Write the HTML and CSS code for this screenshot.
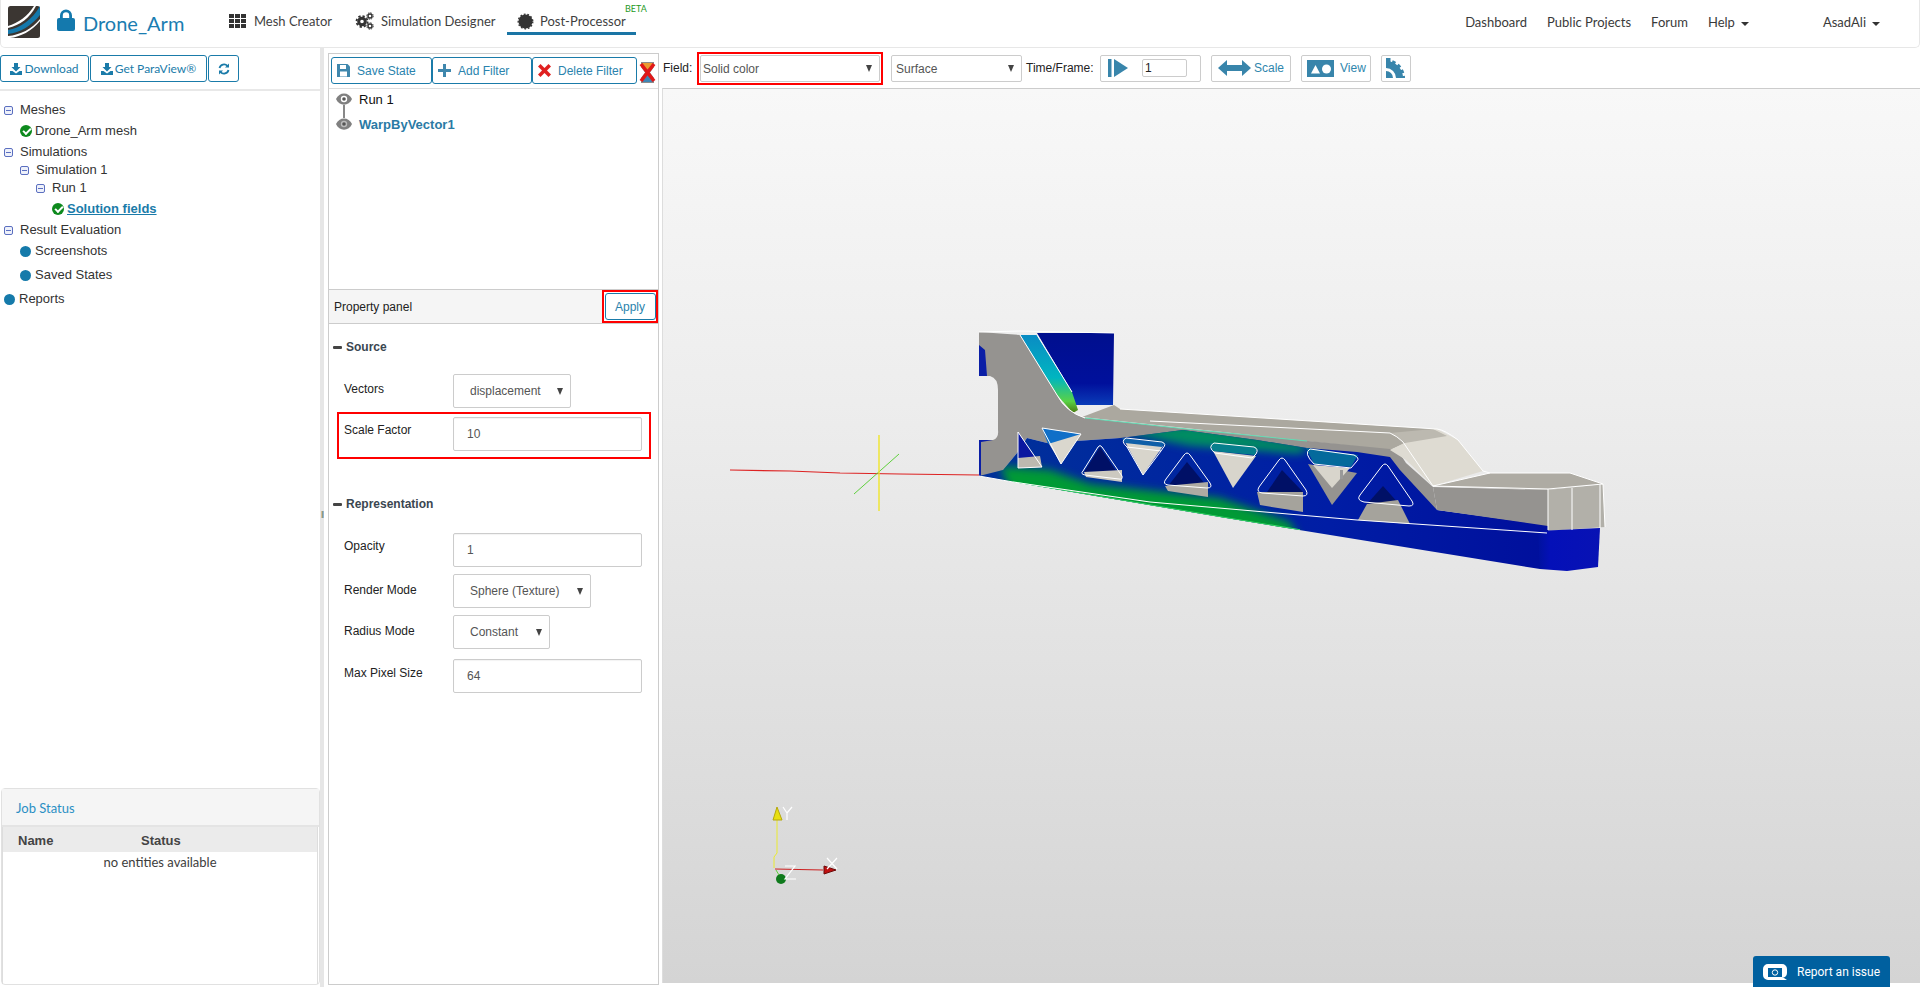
FILE: index.html
```html
<!DOCTYPE html>
<html lang="en">
<head>
<meta charset="utf-8">
<title>Drone_Arm - Post-Processor</title>
<link rel="stylesheet" href="styles.css">
</head>
<body>
<header class="navbar">
  <svg class="logo" viewBox="0 0 32 32"><rect width="32" height="32" rx="2.5" fill="#3b3632"/><path d="M0 24C12 22 24 14 32 0v9C24 19 12 27 0 28z" fill="#1478ab"/><path d="M0 20C10 17 20 10 26 0h2C22 12 12 19 0 22z" fill="#fff"/><path d="M0 30C12 29 24 23 32 13v2C24 25 12 31 2 32H0z" fill="#fff"/></svg>
  <svg class="lock" viewBox="0 0 18 22"><path d="M3 9V6.500a6 6 0 0 1 12 0V9h-2.800V6.500a3.200 3.200 0 0 0-6.400 0V9z" fill="#1479ad"/><rect y="9" width="18" height="13" rx="2" fill="#1479ad"/></svg>
  <span class="project">Drone_Arm</span>
  <nav class="modes">
    <a class="mode mode-mesh"><svg class="mode-icon" viewBox="0 0 17 14"><g fill="#333"><rect width="5" height="4"/><rect x="6" width="5" height="4"/><rect x="12" width="5" height="4"/><rect y="5" width="5" height="4"/><rect x="6" y="5" width="5" height="4"/><rect x="12" y="5" width="5" height="4"/><rect y="10" width="5" height="4"/><rect x="6" y="10" width="5" height="4"/><rect x="12" y="10" width="5" height="4"/></g></svg>Mesh Creator</a>
    <a class="mode mode-sim"><svg class="mode-icon" viewBox="0 0 19 18"><g fill="none" stroke="#333"><circle cx="7" cy="9.500" r="3.300" stroke-width="3"/><circle cx="7" cy="9.500" r="5.500" stroke-width="1.800" stroke-dasharray="2.300 2"/><circle cx="15" cy="4" r="2" stroke-width="1.400"/><circle cx="15" cy="4" r="3.200" stroke-width="1" stroke-dasharray="1.500 1"/><circle cx="15" cy="14" r="2" stroke-width="1.400"/><circle cx="15" cy="14" r="3.200" stroke-width="1" stroke-dasharray="1.500 1"/></g></svg>Simulation Designer</a>
    <a class="mode mode-post"><svg class="mode-icon" viewBox="0 0 17 17"><circle cx="8.500" cy="8.500" r="7" fill="#333"/><circle cx="8.500" cy="8.500" r="7.300" fill="none" stroke="#333" stroke-width="1.300" stroke-dasharray="1.800 1.800"/></svg>Post-Processor<sup class="beta">BETA</sup></a>
  </nav>
  <nav class="links">
    <a>Dashboard</a><a>Public Projects</a><a>Forum</a><a class="caret">Help</a><a class="caret user">AsadAli</a>
  </nav>
</header>

<main class="workspace">
  <aside class="left">
    <div class="left-tools">
      <button class="btn btn-dl"><svg class="ic" viewBox="0 0 12 12"><path d="M4 0h4v4h2.500L6 8.500 1.500 4H4zM0 8h2.500L6 10.500 9.500 8H12v4H0z" fill="#1a7ba9"/></svg>Download</button>
      <button class="btn btn-pv"><svg class="ic" viewBox="0 0 12 12"><path d="M4 0h4v4h2.500L6 8.500 1.500 4H4zM0 8h2.500L6 10.500 9.500 8H12v4H0z" fill="#1a7ba9"/></svg>Get ParaView®</button>
      <button class="btn btn-re"><svg class="ic ic-re" viewBox="0 0 12 12"><path d="M1.500 5A4.600 4.600 0 0 1 9.500 3M10.500 7A4.600 4.600 0 0 1 2.500 9" fill="none" stroke="#1a7ba9" stroke-width="1.800"/><path d="M11 .5v4H7zM1 11.500v-4h4z" fill="#1a7ba9"/></svg></button>
    </div>
    <ul class="tree">
      <li class="t-row t-meshes"><i class="minus"></i>Meshes</li>
      <li class="t-row t-d1 t-gap"><i class="ok"></i>Drone_Arm mesh</li>
      <li class="t-row t-sims"><i class="minus"></i>Simulations</li>
      <li class="t-row t-d1b"><i class="minus"></i>Simulation 1</li>
      <li class="t-row t-d2"><i class="minus"></i>Run 1</li>
      <li class="t-row t-d3"><i class="ok"></i><a class="t-link">Solution fields</a></li>
      <li class="t-row t-res"><i class="minus"></i>Result Evaluation</li>
      <li class="t-row t-d1 t-shot"><i class="dot"></i>Screenshots</li>
      <li class="t-row t-d1 t-saved"><i class="dot"></i>Saved States</li>
      <li class="t-row t-rep"><i class="dot"></i>Reports</li>
    </ul>
    <section class="jobs">
      <h3 class="jobs-title">Job Status</h3>
      <div class="jobs-body">
        <div class="jobs-head"><span class="jh-name">Name</span><span class="jh-status">Status</span></div>
        <p class="jobs-empty">no entities available</p>
      </div>
    </section>
  </aside>

  <div class="splitter"><span class="grip">||</span></div>

  <section class="middle">
    <div class="filter-tools">
      <button class="fbtn fbtn-save"><svg class="fic" viewBox="0 0 13 13"><path d="M0 0h10.500L13 2.500V13H0z" fill="#3f87ad"/><rect x="3" y="1" width="6" height="4" fill="#fff"/><rect x="3" y="7.500" width="7" height="5" fill="#fff"/></svg>Save State</button>
      <button class="fbtn fbtn-add"><svg class="fic" viewBox="0 0 13 13"><path d="M5 0h3v5h5v3H8v5H5V8H0V5h5z" fill="#3f87ad"/></svg>Add Filter</button>
      <button class="fbtn fbtn-del"><svg class="fic" viewBox="0 0 13 13"><path d="M2.500 0 6.500 4 10.500 0 13 2.500 9 6.500 13 10.500 10.500 13 6.500 9 2.500 13 0 10.500 4 6.500 0 2.500z" fill="#e02020"/></svg>Delete Filter</button>
      <svg class="hourglass" viewBox="0 0 17 21"><path d="M2 0h13v5L11 10.500 15 16v5H2v-5l4-5.500L2 5z" fill="#8c8c8c"/><path d="M3 1h11l-2 6H5z" fill="#ea9a32"/><path d="M3 20l5.500-7 5.500 7z" fill="#3e86b5"/><path d="M2 2l13 17M15 2 2 19" stroke="#e01818" stroke-width="3.600"/></svg>
    </div>
    <div class="pipeline">
      <div class="pipe-row"><svg class="eye" viewBox="0 0 16 12"><path d="M0 6C3-1.500 13-1.500 16 6 13 13.500 3 13.500 0 6z" fill="#808080"/><circle cx="8" cy="6" r="3.200" fill="#fff"/><circle cx="8" cy="6" r="1.800" fill="#555"/></svg><span class="pipe-run">Run 1</span></div>
      <div class="pipe-link"></div>
      <div class="pipe-row"><svg class="eye" viewBox="0 0 16 12"><path d="M0 6C3-1.500 13-1.500 16 6 13 13.500 3 13.500 0 6z" fill="#808080"/><circle cx="8" cy="6" r="3.200" fill="#bbb"/><circle cx="8" cy="6" r="1.800" fill="#555"/></svg><span class="pipe-filter">WarpByVector1</span></div>
    </div>
    <div class="prop-head">
      <span>Property panel</span>
      <div class="apply-mark"><button class="apply">Apply</button></div>
    </div>
    <div class="props">
      <h4 class="sec sec-source">Source</h4>
      <div class="frow frow-vectors"><label>Vectors</label><span class="sel sel-118"><select><option>displacement</option></select></span></div>
      <div class="frow mark-scale"><label>Scale Factor</label><input class="num" value="10"></div>
      <h4 class="sec sec-rep">Representation</h4>
      <div class="frow frow-opacity"><label>Opacity</label><input class="num" value="1"></div>
      <div class="frow frow-next frow-sel"><label>Render Mode</label><span class="sel sel-138"><select><option>Sphere (Texture)</option></select></span></div>
      <div class="frow frow-next frow-sel"><label>Radius Mode</label><span class="sel sel-97"><select><option>Constant</option></select></span></div>
      <div class="frow frow-last"><label>Max Pixel Size</label><input class="num" value="64"></div>
    </div>
  </section>

  <section class="view">
    <div class="view-tools">
      <span class="vt-label vt-field">Field:</span>
      <span class="field-mark"><span class="vsel vsel-field"><select><option>Solid color</option></select></span></span>
      <span class="vsel vsel-surface"><select><option>Surface</option></select></span>
      <span class="vt-label vt-time">Time/Frame:</span>
      <div class="vbox vbox-time">
        <svg class="vic-play" viewBox="0 0 20 18"><rect width="3.500" height="18" fill="#3885ab"/><path d="M6 0 20 9 6 18z" fill="#3885ab"/></svg>
        <input class="frame" value="1">
      </div>
      <button class="vbox vbox-scale"><svg class="vic-scale" viewBox="0 0 33 16"><path d="M0 8 9 0v5h15V0l9 8-9 8v-5H9v5z" fill="#3885ab"/></svg>Scale</button>
      <button class="vbox vbox-view"><svg class="vic-view" viewBox="0 0 27 17"><rect width="27" height="17" fill="#3885ab"/><path d="M4 13.500 8.500 5 13 13.500z" fill="#fff"/><circle cx="19.500" cy="9" r="4.500" fill="#fff"/></svg>View</button>
      <button class="vbox vbox-slice"><svg class="vic-slice" viewBox="0 0 20 20"><path d="M0 20v-7a7 7 0 0 1 7 7z" fill="#3885ab"/><path d="M0 6.500A13.500 13.500 0 0 1 13.500 20" fill="none" stroke="#3885ab" stroke-width="7"/><path d="M0 2.500A17.500 17.500 0 0 1 17.500 20" fill="none" stroke="#3885ab" stroke-width="3" stroke-dasharray="3.500 2.800"/><rect width="4.500" height="5" fill="#3885ab"/></svg></button>
    </div>
    <div class="canvas">
      <svg class="scene" viewBox="663 89 1257 894" preserveAspectRatio="none">
        <defs>
          <linearGradient id="gTop" x1="0" y1="0" x2="0" y2="1"><stop offset="0" stop-color="#000f8e"/><stop offset=".7" stop-color="#00109c"/><stop offset="1" stop-color="#0a3cb8"/></linearGradient>
          <linearGradient id="gStripe" x1="0" y1="0" x2="0" y2="1"><stop offset="0" stop-color="#0a8cc4"/><stop offset=".55" stop-color="#00b5c0"/><stop offset=".85" stop-color="#59d246"/><stop offset="1" stop-color="#4a7a10"/></linearGradient>
          <linearGradient id="gEnd" x1="0" y1="0" x2="1" y2="0"><stop offset="0" stop-color="#00129e"/><stop offset=".2" stop-color="#0410b8"/><stop offset="1" stop-color="#0812b4"/></linearGradient>
          <linearGradient id="gFace" gradientUnits="userSpaceOnUse" x1="1000" y1="0" x2="1550" y2="0"><stop offset="0" stop-color="#00309a"/><stop offset=".6" stop-color="#001da5"/><stop offset="1" stop-color="#000f9c"/></linearGradient>
          <filter id="soft" x="-10%" y="-50%" width="120%" height="200%"><feGaussianBlur stdDeviation="4"/></filter>
          <clipPath id="faceClip"><path d="M979 476 1013 482 1220 517 1540 569 1548 560V525L1437 510 1400 470 1390 457 1357 452 1307 448 1257 440 1183 430 1120 438 1047 443 1027 438 1017 453 1003 470z"/></clipPath>
        </defs>
        <path d="M730 470 790 471 840 473 900 474 979 475" fill="none" stroke="#d22" stroke-width="1.200"/>
        <path d="M854 494 899 454" stroke="#5ed03c" stroke-width="1"/>
        <path d="M879 435V511" stroke="#efe62a" stroke-width="1.400"/>

        <path d="M1082 417 1114 405 1120 409 1437 429 1390 450z" fill="#aba89f"/>
        <path d="M1114 333H1037L1072 392V405H1113z" fill="url(#gTop)"/>
        <path d="M1020 335 1037 335 1072 392 1078 410 1073 413 1057 395z" fill="url(#gStripe)"/>
        <path d="M979 332 1020 335 1057 395Q1066 412 1085 418L1187 429 1390 449Q1400 452 1406 463L1433 487 1437 510 1400 505 1150 455 1120 438 1047 443 1027 438 1017 453 1003 470 1003 480 979 476V440H993Q999 438 998 430V390Q998 378 990 376H979z" fill="#959390"/>
        <path d="M979 345 985 350 987 376H979zM979 440H993L981 442V476H979z" fill="#0a1ea6"/>

        <path d="M979 476 1013 482 1220 517 1540 569 1548 560V525L1437 510 1400 470 1390 457 1357 452 1307 448 1257 440 1183 430 1120 438 1047 443 1027 438 1017 453 1003 470z" fill="url(#gFace)"/>
        <g clip-path="url(#faceClip)">
          <path d="M1000 466 1050 470 1090 484 1220 498 1290 522 1300 540 1230 530 1010 490z" fill="#069a36" filter="url(#soft)"/>
          <path d="M1120 432 1190 424 1310 446 1300 454 1190 446z" fill="#058c62" filter="url(#soft)"/>
          <path d="M1013 482 1220 517 1300 530" fill="none" stroke="#3fe06a" stroke-width="1.500"/>
        </g>
        <path d="M1390 450 1433 429 1437 429 1458 440 1483 471 1433 486 1406 460z" fill="#dedbd2"/>
        <path d="M1390 433 1433 429 1447 436 1405 443z" fill="#bcb9b0"/>
        <path d="M1433 486 1490 473H1570L1603 484 1548 490z" fill="#aeaba3"/>
        <path d="M1433 487 1548 490V526L1437 510z" fill="#959390"/>
        <path d="M1548 490 1603 484 1605 527 1548 531z" fill="#b2b0a9"/>
        <path d="M1538 531 1600 528 1598 567 1567 571 1540 569z" fill="url(#gEnd)"/>

        <path d="M1018 432 1042 467 1018 468z" fill="#0a17a0"/>
        <path d="M1018 458 1040 456 1042 467 1018 468z" fill="#bcb9b0"/>
        <path d="M1042 428 1081 434 1061 464 1048 442z" fill="#dad7ce"/>
        <path d="M1042 428 1081 434 1048 444z" fill="#0f6fc8"/>
        <path d="M1100 447 1118 474 1084 472z" fill="#001066"/>
        <path d="M1084 472 1122 470 1122 482 1086 477z" fill="#ccc9c0"/>
        <path d="M1125 442 1163 446 1143 475z" fill="#d8d5cc"/>
        <path d="M1122 438 1165 443 1162 447 1125 443z" fill="#0f5fa8"/>
        <path d="M1187 462 1205 484 1168 486z" fill="#001066"/>
        <path d="M1165 486 1208 482 1208 497 1168 491z" fill="#aeaba3"/>
        <path d="M1213 451 1256 456 1233 488z" fill="#d8d5cc"/>
        <path d="M1210 443 1257 448 1255 455 1213 451z" fill="#067f8c"/>
        <path d="M1282 470 1303 492 1265 495z" fill="#001066"/>
        <path d="M1257 492 1303 492 1303 512 1260 505z" fill="#a5a39c"/>
        <path d="M1308 464 1357 473 1332 505z" fill="#959390"/>
        <path d="M1313 465 1350 468 1332 488z" fill="#d8d5cc"/>
        <path d="M1306 448 1358 455 1351 467 1314 464z" fill="#046a9c"/>
        <path d="M1383 486 1400 505 1367 504z" fill="#001066"/>
        <path d="M1358 520 1367 504 1398 500 1410 524z" fill="#a5a39c"/>

        <path d="M1085 418 1187 429 1307 441" fill="none" stroke="#63dcb4" stroke-width="1"/>
        <g fill="none" stroke="#fff" stroke-width="1" stroke-linejoin="round">
          <path d="M979 332 1020 331 1114 333M1037 335 1072 392"/>
          <path d="M1020 335 1057 395Q1066 412 1085 418"/>
          <path d="M1120 409 1437 429Q1445 430 1458 440L1483 471 1490 473H1570L1603 484 1605 527"/>
          <path d="M1150 421 1390 433Q1397 436 1403 442L1433 486 1490 473"/>
          <path d="M1433 486 1548 489 1603 484M1548 489V530M1572 488V530M1600 485V528"/>
          <path d="M979 476 1013 482 1150 502 1357 520 1547 533"/>
          <path d="M1018 432 1042 467 1018 468zM1042 428 1081 434 1061 464z"/>
          <path d="M1098 447Q1100 444 1102 447L1122 476Q1123 480 1119 479L1085 475Q1080 474 1083 471z"/>
          <path d="M1126 438 1162 442Q1167 444 1163 448L1161 451 1127 447Q1120 441 1126 438zM1127 447 1143 475 1161 451"/>
          <path d="M1184 455Q1187 451 1190 455L1210 483Q1213 488 1207 488L1168 485Q1162 484 1166 479z"/>
          <path d="M1214 443 1254 447Q1259 449 1256 454L1252 458 1215 453Q1207 447 1214 443z"/>
          <path d="M1279 460Q1282 456 1285 460L1306 490Q1309 496 1303 496L1262 493Q1256 492 1259 487z"/>
          <path d="M1310 449 1354 455Q1360 458 1357 461L1351 468 1314 464Q1303 453 1310 449z"/>
          <path d="M1382 466Q1385 462 1388 466L1412 501Q1415 506 1409 506L1364 502Q1356 500 1360 495z"/>
        </g>
        <rect x="1340" y="470" width="3" height="9" fill="#999"/>

        <path d="M777 820V853L774 857V868" fill="none" stroke="#eaea30" stroke-width="1"/>
        <path d="M777 807 773 820H782z" fill="#e8df10" stroke="#b5a80c"/>
        <path d="M775 869 823 870" stroke="#cc2020" stroke-width="1.200"/>
        <path d="M836 870 824 866V874z" fill="#c01010" stroke="#6b0a0a"/>
        <circle cx="781" cy="879" r="5" fill="#0f7a1c"/>
        <path d="M776 870 779 875" stroke="#5ed03c"/>
        <path d="M783 807 787 813 792 807M787 813V820M785 866H795L785 879H796M827 858 837 869M837 858 827 869" fill="none" stroke="#fff" stroke-width="1.200"/>
      </svg>
      <button class="report"><svg class="report-ic" viewBox="0 0 24 16"><path d="M5 0H19A5 5 0 0 1 24 5V9A5 5 0 0 1 19 14H21L24 16H14 5A5 5 0 0 1 0 11V5A5 5 0 0 1 5 0z" fill="#fff"/><rect x="5" y="4" width="14" height="9" fill="#00609f"/><circle cx="12" cy="8.500" r="2.700" fill="none" stroke="#fff"/></svg>Report an issue</button>
    </div>
  </section>
</main>
</body>
</html>
```
FILE: styles.css
```css
* { box-sizing: border-box; }
html, body { margin: 0; padding: 0; height: 987px; overflow: hidden; background: #fff; }
body { font-family: "Liberation Sans", Arial, sans-serif; font-size: 12px; color: #333; display: flex; flex-direction: column; }
button { font: inherit; background: #fff; cursor: pointer; padding: 0; }
ul, h3, h4, p { margin: 0; padding: 0; list-style: none; }

.navbar { height: 48px; flex: none; display: flex; align-items: flex-start; border: 1px solid #e7e7e7; border-top: 0; border-radius: 0 0 5px 5px; font-family: Lato, sans-serif; font-size: 13px; color: #3f3f3f; position: relative; }
.logo { width: 32px; height: 32px; margin: 6px 0 0 7px; flex: none; }
.lock { width: 18px; height: 22px; margin: 9px 0 0 17px; flex: none; }
.project { font-size: 20px; line-height: 30px; margin: 8px 0 0 8px; color: #1a7db1; width: 101px; white-space: nowrap; }
.modes { display: flex; margin-left: 45px; height: 35px; }
.mode { display: flex; align-items: center; height: 35px; padding-top: 7px; white-space: nowrap; position: relative; }
.mode-icon { height: 14px; width: 17px; margin-right: 8px; flex: none; }
.mode-mesh { width: 126px; }
.mode-sim .mode-icon { width: 19px; height: 18px; margin-right: 7px; }
.mode-sim { width: 152px; }
.mode-post { width: 129px; padding-left: 10px; border-bottom: 3px solid #1a75a5; padding-top: 10px; }
.mode-post .mode-icon { height: 17px; margin-right: 6px; }
.beta { position: absolute; left: 118px; top: 4px; font-size: 9px; line-height: 10px; color: #1f9a1f; }
.links { margin-left: auto; display: flex; height: 44px; align-items: center; padding-right: 39px; }
.links a { margin-left: 20px; white-space: nowrap; color: #3a3a3a; }
.caret::after { content: ""; display: inline-block; margin-left: 6px; vertical-align: middle; border-top: 4px solid #333; border-left: 4px solid transparent; border-right: 4px solid transparent; }
.links .user { margin-left: 74px; }

.workspace { flex: 1; display: flex; min-height: 0; }

.left { width: 320px; flex: none; display: flex; flex-direction: column; padding-bottom: 2px; }
.left-tools { height: 43px; padding-top: 7px; border-bottom: 2px solid #e8e8e8; display: flex; flex: none; }
.btn { height: 27px; border: 1px solid #1a7ba9; border-radius: 3px; color: #1a7ba9; font-family: Lato, sans-serif; font-size: 12px; display: flex; align-items: center; justify-content: center; margin-right: 1px; }
.btn-dl { width: 89px; }
.btn-pv { width: 117px; }
.btn-re { width: 31px; }
.ic { width: 12px; height: 12px; margin-right: 2px; flex: none; }
.ic-re { margin-right: 0; }

.tree { flex: 1; font-size: 13px; color: #333; position: relative; padding-top: 10px; }
.t-row { height: 18px; line-height: 18px; display: flex; align-items: center; white-space: nowrap; }
.minus { width: 9px; height: 9px; border: 1px solid #5b6fc0; border-radius: 2px; background: linear-gradient(#5b6fc0, #5b6fc0) center / 5px 1px no-repeat #eef1fa; margin-right: 7px; flex: none; }
.ok { width: 12px; height: 12px; border-radius: 50%; background: #0e8a1e; margin-right: 3px; flex: none; position: relative; }
.ok::after { content: ""; position: absolute; left: 3px; top: 3px; width: 6px; height: 3px; border-left: 2px solid #fff; border-bottom: 2px solid #fff; transform: rotate(-45deg); }
.dot { width: 11px; height: 11px; border-radius: 50%; background: #157aaa; margin-right: 4px; flex: none; }
.t-meshes, .t-sims, .t-res { padding-left: 4px; }
.t-d1 { padding-left: 20px; }
.t-gap { margin-top: 3px; }
.t-sims { margin-top: 3px; }
.t-d1b { padding-left: 20px; }
.t-d2 { padding-left: 36px; }
.t-d3 { padding-left: 52px; margin-top: 3px; }
.t-res { margin-top: 3px; }
.t-shot { margin-top: 3px; }
.t-saved { margin-top: 6px; }
.t-rep { padding-left: 4px; margin-top: 6px; }
.t-link { color: #1a7ba9; font-weight: bold; text-decoration: underline; }
.t-d1 .dot { margin-right: 4px; }

.jobs { height: 197px; flex: none; margin-left: 1px; border: 1px solid #e1e1e1; border-radius: 4px; display: flex; flex-direction: column; font-family: Lato, sans-serif; }
.jobs-title { height: 38px; line-height: 38px; padding-left: 14px; background: #f5f5f5; font-size: 13px; font-weight: 400; color: #2b8fc4; border-bottom: 2px solid #e4e4e4; flex: none; }
.jobs-body { flex: 1; width: 316px; border-left: 1px solid #ddd; border-right: 1px solid #ddd; }
.jobs-head { height: 25px; background: #ebebeb; font-family: "Liberation Sans", Arial, sans-serif; font-size: 13px; font-weight: bold; color: #444; line-height: 28px; position: relative; display: flex; }
.jh-name { margin-left: 15px; width: 123px; }
.jobs-empty { text-align: center; font-size: 13px; line-height: 20px; color: #3d3d3d; }

.splitter { width: 4px; margin-right: 4px; flex: none; background: #e6e6e6; position: relative; }
.grip { position: absolute; top: 461px; left: 1px; font-size: 8px; line-height: 10px; letter-spacing: -1px; color: #555; }

.middle { width: 331px; flex: none; margin-top: 5px; margin-bottom: 2px; border: 1px solid #ccc; display: flex; flex-direction: column; }
.filter-tools { height: 35px; flex: none; display: flex; align-items: flex-start; padding: 3px 0 0 2px; border-bottom: 1px solid #ddd; }
.fbtn { height: 27px; border: 1px solid #1a7ba9; border-radius: 3px; color: #2a83ad; font-size: 12px; display: flex; align-items: center; margin-right: 0; padding-left: 5px; white-space: nowrap; }
.fbtn-save { width: 101px; }
.fbtn-add { width: 100px; }
.fbtn-del { width: 105px; }
.fic { width: 13px; height: 13px; flex: none; margin-right: 7px; }
.fbtn-del .fic { margin-right: 7px; }
.hourglass { width: 17px; height: 21px; margin: 5px 0 0 2px; flex: none; }

.pipeline { height: 200px; flex: none; padding: 0 0 0 7px; font-size: 13px; }
.pipe-row { height: 20px; display: flex; align-items: center; }
.eye { width: 16px; height: 12px; margin-right: 7px; flex: none; }
.pipe-run { color: #111; }
.pipe-filter { color: #2a7aa5; font-weight: bold; }
.pipe-link { width: 2px; height: 13px; margin: -4px 0 -4px 7px; background: #888; }

.prop-head { height: 35px; flex: none; background: #f5f5f5; border-top: 1px solid #ccc; border-bottom: 1px solid #ccc; display: flex; align-items: center; justify-content: space-between; padding-left: 5px; color: #222; }
.apply-mark { width: 56px; height: 33px; border: 2px solid #f00; margin-right: 0; display: flex; align-items: center; justify-content: center; background: #fff; }
.apply { width: 51px; height: 27px; border: 1px solid #1a7ba9; border-radius: 3px; color: #2a83ad; font-size: 12px; }

.props { flex: 1; position: relative; }
.sec { font-size: 12px; font-weight: bold; color: #3a4650; display: flex; align-items: center; height: 16px; padding-left: 4px; }
.sec::before { content: ""; width: 9px; height: 3px; background: #444; margin-right: 4px; border-radius: 1px; }
.sec-source { margin-top: 15px; }
.sec-rep { margin-top: 37px; }
.frow { display: flex; align-items: flex-start; padding-left: 15px; }
.frow label { width: 109px; flex: none; line-height: 16px; color: #222; padding-top: 6px; }
.frow-vectors { margin-top: 19px; }
.frow-vectors label { padding-top: 7px; }
.mark-scale { width: 314px; height: 47px; border: 2px solid #f00; margin: 4px 0 0 8px; padding: 3px 0 0 5px; }
.mark-scale label { padding-top: 5px; }
.frow-opacity { margin-top: 21px; }
.frow-opacity label { padding-top: 5px; }
.frow-next { margin-top: 7px; }
.frow-sel label { padding-top: 8px; }
.frow-last { margin-top: 10px; }
.num { width: 189px; height: 34px; border: 1px solid #ccc; border-radius: 2px; padding: 0 13px; font: inherit; color: #555; box-shadow: inset 0 1px 1px rgba(0,0,0,.05); }
.sel { position: relative; display: block; height: 34px; }
.sel select { width: 100%; height: 100%; border: 1px solid #ccc; border-radius: 2px; background: #fff; padding: 0 16px; font: inherit; color: #555; appearance: none; -webkit-appearance: none; }
.sel::after, .vsel::after { content: ""; position: absolute; top: 50%; margin-top: -3px; right: 8px; border-top: 7px solid #444; border-left: 3px solid transparent; border-right: 3px solid transparent; pointer-events: none; }
.sel-118 { width: 118px; }
.sel-138 { width: 138px; }
.sel-97 { width: 97px; }

.view { flex: 1; min-width: 0; display: flex; flex-direction: column; }
.view-tools { height: 40px; flex: none; display: flex; align-items: center; padding-left: 4px; }
.vt-label { font-size: 12px; color: #222; white-space: nowrap; }
.vt-field { width: 34px; }
.field-mark { width: 186px; height: 33px; border: 2px solid #f00; display: flex; align-items: center; justify-content: center; margin-right: 8px; }
.vsel { position: relative; display: block; }
.vsel select { width: 100%; height: 100%; border: 1px solid #ccc; border-radius: 2px; background: #fff; padding: 2px 4px 0 3px; font: inherit; color: #555; appearance: none; -webkit-appearance: none; }
.vsel-field { width: 180px; height: 27px; }
.vsel-field select { padding-left: 2px; }
.vsel-surface { width: 131px; height: 27px; }
.vsel-surface select { padding-left: 4px; }
.vt-time { margin-left: 4px; width: 74px; }
.vbox { height: 27px; border: 1px solid #ccc; border-radius: 2px; background: #fff; color: #2e86ad; font-size: 12px; display: flex; align-items: center; flex: none; }
.vbox-time { width: 101px; padding-left: 7px; }
.vic-play { width: 20px; height: 18px; flex: none; }
.frame { width: 45px; height: 18px; margin-left: 14px; border: 1px solid #ccc; border-radius: 2px; font: inherit; color: #222; padding: 0 2px; }
.vbox-scale { width: 80px; margin-left: 10px; padding-left: 6px; }
.vic-scale { width: 33px; height: 16px; margin-right: 3px; flex: none; }
.vbox-view { width: 70px; margin-left: 10px; padding-left: 5px; }
.vic-view { width: 27px; height: 17px; margin-right: 6px; flex: none; }
.vbox-slice { width: 30px; margin-left: 10px; justify-content: center; }
.vic-slice { width: 20px; height: 20px; }

.canvas { height: 895px; flex: none; margin-left: 3px; border-top: 1px solid #ccc; border-left: 1px solid #ddd; background: linear-gradient(#f8f8f8, #ededed 35%, #d4d4d4); position: relative; }
.scene { display: block; width: 100%; height: 100%; }
.report { position: absolute; right: 30px; top: 867px; width: 137px; height: 32px; border: 0; border-radius: 3px 3px 0 0; background: #00609f; color: #fff; font-family: Roboto, sans-serif; font-size: 12px; display: flex; align-items: center; padding-left: 10px; }
.report-ic { width: 24px; height: 16px; margin-right: 10px; flex: none; }
```
